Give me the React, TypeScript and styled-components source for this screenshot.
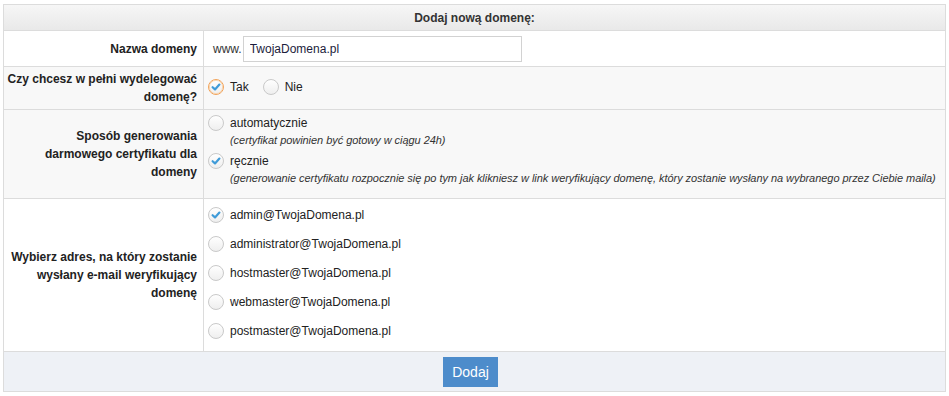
import { FunctionComponent, JSX } from 'react';
import styled, { createGlobalStyle } from 'styled-components';

const GlobalStyle = createGlobalStyle`
  body {
    margin: 0;
    background: #ffffff;
    font-family: 'Liberation Sans', Arial, sans-serif;
    font-size: 12px;
    color: #222;
  }
`;

const Page = styled.div`
  padding: 4px 3px;
`;

const FormTable = styled.div`
  display: grid;
  grid-template-columns: 200px 1fr;
  border: 1px solid #dcdcdc;
  border-bottom: none;
`;

const HeaderCell = styled.div`
  grid-column: 1 / -1;
  height: 25px;
  display: flex;
  align-items: center;
  justify-content: center;
  font-weight: bold;
  color: #333;
  background: linear-gradient(#f6f6f6, #e9e9e9);
  border-bottom: 1px solid #dcdcdc;
`;

const LabelCell = styled.div<{ $h: number; $bg: string }>`
  height: ${({ $h }) => $h}px;
  box-sizing: border-box;
  display: flex;
  align-items: center;
  justify-content: flex-end;
  text-align: right;
  padding: 0 6px 0 3px;
  font-weight: bold;
  line-height: 18px;
  color: #222;
  background: ${({ $bg }) => $bg};
  border-right: 1px solid #dcdcdc;
  border-bottom: 1px solid #dcdcdc;
`;

const ValueCell = styled.div<{ $h: number; $bg: string; $top?: number }>`
  height: ${({ $h }) => $h}px;
  box-sizing: border-box;
  display: flex;
  flex-direction: column;
  justify-content: ${({ $top }) => ($top === undefined ? 'center' : 'flex-start')};
  padding: ${({ $top }) => ($top === undefined ? 0 : $top)}px 0 0 4px;
  background: ${({ $bg }) => $bg};
  border-bottom: 1px solid #dcdcdc;
`;

const InlineRow = styled.div`
  display: flex;
  align-items: center;
`;

const Prefix = styled.span`
  color: #333;
  margin: 0 1px 0 5px;
`;

const DomainInput = styled.input`
  width: 279px;
  height: 26px;
  box-sizing: border-box;
  border: 1px solid #d2d2d2;
  padding: 0 6px;
  font-family: 'Liberation Sans', Arial, sans-serif;
  font-size: 12px;
  color: #1c1c3c;
  outline: none;
`;

const Option = styled.label<{ $gap?: number }>`
  display: flex;
  align-items: center;
  gap: 6px;
  margin-right: ${({ $gap }) => $gap ?? 0}px;
  color: #222;
  cursor: pointer;
`;

const OptionBlock = styled.div<{ $mb: number }>`
  display: flex;
  flex-direction: column;
  margin-bottom: ${({ $mb }) => $mb}px;
`;

const Hint = styled.span`
  font-style: italic;
  font-size: 11px;
  letter-spacing: -0.05px;
  color: #333;
  margin: 3px 0 0 22px;
`;

const EmailList = styled.div`
  display: flex;
  flex-direction: column;
  gap: 13px;
`;

const FooterCell = styled.div`
  grid-column: 1 / -1;
  height: 40px;
  box-sizing: border-box;
  display: flex;
  align-items: center;
  justify-content: center;
  padding-right: 8px;
  background: #eef1f6;
  border-bottom: 1px solid #dcdcdc;
`;

const SubmitButton = styled.button`
  width: 55px;
  height: 30px;
  border: none;
  background: #4d8ccb;
  color: #fff;
  font-family: 'Liberation Sans', Arial, sans-serif;
  font-size: 14px;
  cursor: pointer;
`;

const Radio: FunctionComponent<{ checked?: boolean; focused?: boolean }> = ({ checked, focused }) => (
  <svg width="16" height="16" viewBox="0 0 16 16">
    <defs>
      <linearGradient id="rg" x1="0" y1="0" x2="0" y2="1">
        <stop offset="0" stopColor="#ffffff" />
        <stop offset="1" stopColor="#eeeeee" />
      </linearGradient>
    </defs>
    <circle cx="8" cy="8" r="7.5" fill="url(#rg)" stroke={focused ? '#f1a35a' : '#c9c9c9'} strokeWidth="1" />
    {focused && <circle cx="8" cy="8" r="6.6" fill="none" stroke="#f8cfa5" strokeWidth="0.8" />}
    {checked && (
      <path d="M4.6 8.2 L7 10.4 L11.4 5.6" fill="none" stroke="#3f9bd8" strokeWidth="2.2" strokeLinecap="round" strokeLinejoin="round" />
    )}
  </svg>
);

const emails = ['admin', 'administrator', 'hostmaster', 'webmaster', 'postmaster'];

const App: FunctionComponent = (): JSX.Element => {
  return (
    <Page>
      <GlobalStyle />
      <FormTable>
        <HeaderCell>Dodaj nową domenę:</HeaderCell>

        <LabelCell $h={36} $bg="#ffffff">Nazwa domeny</LabelCell>
        <ValueCell $h={36} $bg="#ffffff">
          <InlineRow>
            <Prefix>www.</Prefix>
            <DomainInput defaultValue="TwojaDomena.pl" />
          </InlineRow>
        </ValueCell>

        <LabelCell $h={43} $bg="#f8f8f8">Czy chcesz w pełni wydelegować domenę?</LabelCell>
        <ValueCell $h={43} $bg="#f8f8f8" $top={12}>
          <InlineRow>
            <Option $gap={14}><Radio checked focused />Tak</Option>
            <Option><Radio />Nie</Option>
          </InlineRow>
        </ValueCell>

        <LabelCell $h={89} $bg="#f8f8f8">Sposób generowania darmowego certyfikatu dla domeny</LabelCell>
        <ValueCell $h={89} $bg="#f8f8f8" $top={5}>
          <OptionBlock $mb={7}>
            <Option><Radio />automatycznie</Option>
            <Hint>(certyfikat powinien być gotowy w ciągu 24h)</Hint>
          </OptionBlock>
          <OptionBlock $mb={0}>
            <Option><Radio checked />ręcznie</Option>
            <Hint>(generowanie certyfikatu rozpocznie się po tym jak klikniesz w link weryfikujący domenę, który zostanie wysłany na wybranego przez Ciebie maila)</Hint>
          </OptionBlock>
        </ValueCell>

        <LabelCell $h={153} $bg="#ffffff">Wybierz adres, na który zostanie wysłany e-mail weryfikujący domenę</LabelCell>
        <ValueCell $h={153} $bg="#ffffff" $top={8}>
          <EmailList>
            {emails.map((name, i) => (
              <Option key={name}><Radio checked={i === 0} />{name}@TwojaDomena.pl</Option>
            ))}
          </EmailList>
        </ValueCell>

        <FooterCell>
          <SubmitButton>Dodaj</SubmitButton>
        </FooterCell>
      </FormTable>
    </Page>
  );
};

export default App;
